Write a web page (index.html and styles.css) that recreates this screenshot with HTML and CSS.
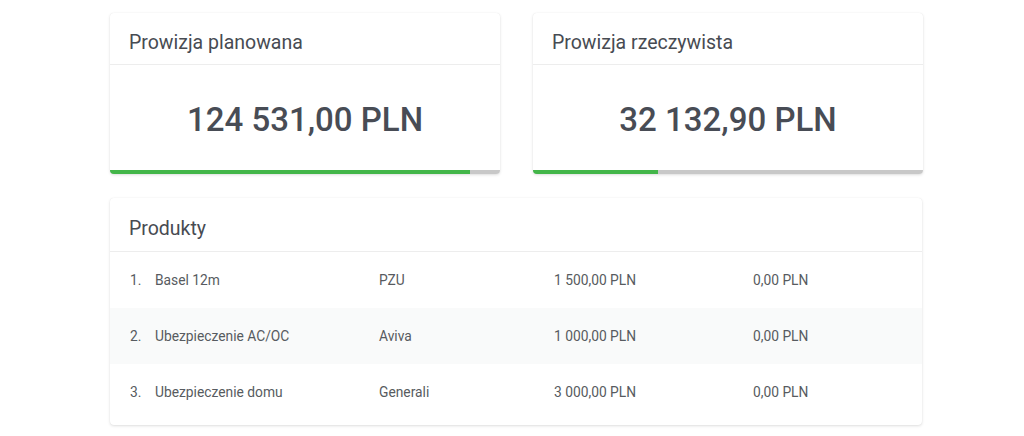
FILE: index.html
```html
<!DOCTYPE html>
<html lang="pl">
<head>
<meta charset="utf-8">
<title>Prowizje</title>
<link rel="stylesheet" href="styles.css">
</head>
<body>
<div class="page">
  <div class="summary">
    <div class="card stat">
      <div class="card-head"><h2>Prowizja planowana</h2></div>
      <div class="stat-body">124 531,00 PLN</div>
      <div class="bar"><div class="bar-fill" style="width:92.3%"></div></div>
    </div>
    <div class="card stat">
      <div class="card-head"><h2>Prowizja rzeczywista</h2></div>
      <div class="stat-body">32 132,90 PLN</div>
      <div class="bar"><div class="bar-fill" style="width:32%"></div></div>
    </div>
  </div>
  <div class="card products">
    <div class="card-head"><h2>Produkty</h2></div>
    <div class="rows">
      <div class="row">
        <span class="c-num">1.</span><span class="c-name">Basel 12m</span><span class="c-prov">PZU</span><span class="c-amt">1 500,00 PLN</span><span class="c-real">0,00 PLN</span>
      </div>
      <div class="row alt">
        <span class="c-num">2.</span><span class="c-name">Ubezpieczenie AC/OC</span><span class="c-prov">Aviva</span><span class="c-amt">1 000,00 PLN</span><span class="c-real">0,00 PLN</span>
      </div>
      <div class="row">
        <span class="c-num">3.</span><span class="c-name">Ubezpieczenie domu</span><span class="c-prov">Generali</span><span class="c-amt">3 000,00 PLN</span><span class="c-real">0,00 PLN</span>
      </div>
    </div>
  </div>
</div>
</body>
</html>
```

FILE: styles.css
```css
* { box-sizing: border-box; }
html, body { margin: 0; padding: 0; background: #ffffff; }
body {
  font-family: Roboto, "Liberation Sans", Arial, sans-serif;
  color: #474b52;
}
.page {
  width: 1024px;
  height: 436px;
  padding: 13px 0 0 110px;
}
.summary {
  display: grid;
  grid-template-columns: 390px 390px;
  column-gap: 33px;
  width: 813px;
}
.card {
  background: #fff;
  border-radius: 4px;
  box-shadow: 0 1px 3px rgba(0, 0, 0, 0.13), 0 0 1px rgba(0, 0, 0, 0.08);
  overflow: hidden;
}
.card-head {
  height: 52px;
  border-bottom: 1px solid #ededed;
  padding: 0 19px;
  display: flex;
  align-items: center;
}
.card-head h2 {
  margin: 0;
  font-size: 19.5px;
  font-weight: 400;
  color: #474b52;
  padding-top: 7px;
}
.stat-body {
  height: 105px;
  display: flex;
  align-items: center;
  justify-content: center;
  font-size: 33px;
  font-weight: 500;
  color: #484c55;
  padding-top: 3px;
}
.bar {
  height: 4px;
  background: #c8c8c8;
}
.bar-fill {
  height: 100%;
  background: #43b649;
}
.products {
  margin-top: 24px;
  width: 812px;
  padding-bottom: 5px;
}
.products .card-head { height: 54px; }
.row {
  height: 56px;
  display: flex;
  align-items: center;
  font-size: 13.8px;
  color: #575b60;
  padding-left: 20px;
}
.row.alt { background: #f9fafa; }
.c-num { width: 25px; }
.c-name { width: 224px; }
.c-prov { width: 175px; }
.c-amt { width: 199px; }
.c-real { width: 100px; }
```
